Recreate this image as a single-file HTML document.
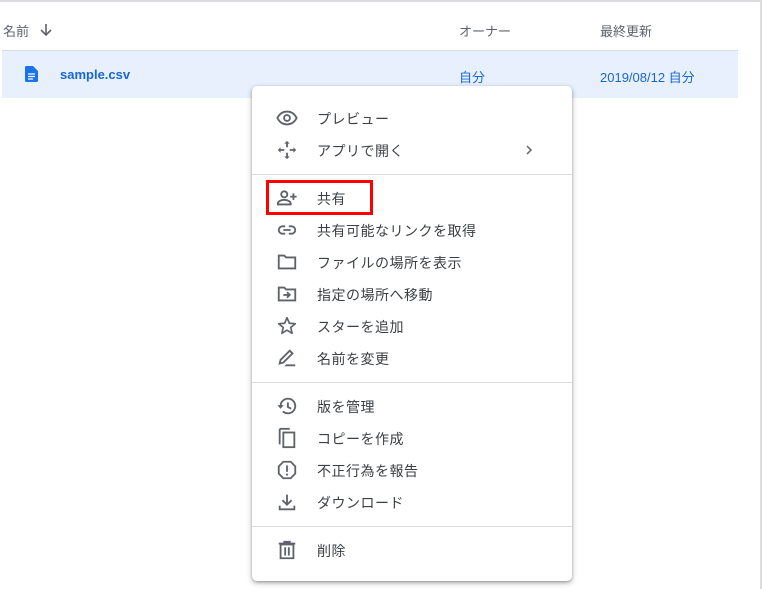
<!DOCTYPE html>
<html><head><meta charset="utf-8">
<style>
*{margin:0;padding:0;box-sizing:border-box}
html,body{width:763px;height:589px;background:#fff;overflow:hidden;font-family:"Liberation Sans","Noto Sans CJK JP",sans-serif;position:relative}
.topline{position:absolute;left:0;top:0;width:762px;height:2px;background:#dadce0}
.rline{position:absolute;left:760px;top:0;width:2px;height:589px;background:#dadce0}
.h{position:absolute;top:21px;font-size:13px;color:#5f6368}
.sep{position:absolute;left:2px;top:50px;width:736px;height:1px;background:#dadce0}
.row{position:absolute;left:2px;top:51px;width:736px;height:47px;background:#e8f0fe}
.blue{position:absolute;top:67px;font-size:13px;color:#1967d2}
.menu{position:absolute;left:252px;top:86px;width:320px;height:495px;background:#fff;border-radius:5px;box-shadow:0 2px 6px rgba(0,0,0,.3),0 1px 2px rgba(0,0,0,.2)}
.it{position:absolute;left:0;width:320px;height:32px}
.it svg{position:absolute;left:24px;top:5px;width:22px;height:22px}
.it span{position:absolute;left:65px;top:7px;font-size:14px;color:#3c4043;letter-spacing:.5px}
.div{position:absolute;left:0;width:320px;height:1px;background:#dadce0}
.red{position:absolute;left:266px;top:180px;width:107px;height:35px;border:3px solid #f00}
</style></head><body>
<div class="topline"></div><div class="rline"></div>
<div class="h" style="left:3px">名前</div>
<svg style="position:absolute;left:38px;top:22px" width="16" height="16" viewBox="0 0 16 16"><path d="M8 2v11M3 8l5 5 5-5" stroke="#5f6368" stroke-width="1.6" fill="none"/></svg>
<div class="h" style="left:459px">オーナー</div>
<div class="h" style="left:600px">最終更新</div>
<div class="sep"></div>
<div class="row"></div>
<svg style="position:absolute;left:25px;top:66px" width="13" height="16" viewBox="0 0 13 16"><path d="M1.5 0H8l5 5v9.5a1.5 1.5 0 0 1-1.5 1.5h-10A1.5 1.5 0 0 1 0 14.5v-13A1.5 1.5 0 0 1 1.5 0z" fill="#1a73e8"/><path d="M3 8h7M3 10.5h7M3 13h5" stroke="#fff" stroke-width="1.3"/></svg>
<div class="blue" style="left:60px;font-weight:bold">sample.csv</div>
<div class="blue" style="left:459px">自分</div>
<div class="blue" style="left:600px">2019/08/12 自分</div>

<div class="menu">
 <div class="it" style="top:16px"><svg viewBox="0 0 24 24"><path d="M1.5 12C4 7 8 5 12 5s8 2 10.5 7C20 17 16 19 12 19S4 17 1.5 12z" fill="none" stroke="#5f6368" stroke-width="2"/><circle cx="12" cy="12" r="3.2" fill="none" stroke="#5f6368" stroke-width="2"/></svg><span>プレビュー</span></div>
 <div class="it" style="top:48px"><svg viewBox="0 0 24 24"><path d="M12 2l-3 3h2v4h2V5h2zM12 22l3-3h-2v-4h-2v4H9zM2 12l3 3v-2h4v-2H5V9zM22 12l-3-3v2h-4v2h4v2z" fill="#5f6368"/></svg><span>アプリで開く</span><svg style="left:270px;top:9px;width:14px;height:14px" viewBox="0 0 14 14"><path d="M5 3l4 4-4 4" fill="none" stroke="#5f6368" stroke-width="1.5"/></svg></div>
 <div class="div" style="top:88px"></div>
 <div class="it" style="top:96px"><svg viewBox="0 0 24 24"><circle cx="9" cy="8" r="3.3" fill="none" stroke="#5f6368" stroke-width="2"/><path d="M2 19v-1c0-2.5 4-4 7-4s7 1.5 7 4v1z" fill="none" stroke="#5f6368" stroke-width="2"/><path d="M19 7v7M15.5 10.5h7" stroke="#5f6368" stroke-width="2"/></svg><span>共有</span></div>
 <div class="it" style="top:128px"><svg viewBox="0 0 24 24"><path d="M10 8H7a4 4 0 0 0 0 8h3M14 8h3a4 4 0 0 1 0 8h-3M8 12h8" fill="none" stroke="#5f6368" stroke-width="2"/></svg><span>共有可能なリンクを取得</span></div>
 <div class="it" style="top:160px"><svg viewBox="0 0 24 24"><path d="M3 5h6l2 2h10v12H3z" fill="none" stroke="#5f6368" stroke-width="2"/></svg><span>ファイルの場所を表示</span></div>
 <div class="it" style="top:192px"><svg viewBox="0 0 24 24"><path d="M3 5h6l2 2h10v12H3z" fill="none" stroke="#5f6368" stroke-width="2"/><path d="M8 13h7M12 10l3 3-3 3" fill="none" stroke="#5f6368" stroke-width="2"/></svg><span>指定の場所へ移動</span></div>
 <div class="it" style="top:224px"><svg viewBox="0 0 24 24"><path d="M12 3l2.6 6 6.4.5-4.9 4.2 1.5 6.3L12 16.6 6.4 20l1.5-6.3L3 9.5 9.4 9z" fill="none" stroke="#5f6368" stroke-width="1.8" stroke-linejoin="round"/></svg><span>スターを追加</span></div>
 <div class="it" style="top:256px"><svg viewBox="0 0 24 24"><path d="M4 18l1-4L15 4l3 3L8 17z" fill="none" stroke="#5f6368" stroke-width="2"/><path d="M11 19h10v2H9z" fill="#5f6368"/></svg><span>名前を変更</span></div>
 <div class="div" style="top:296px"></div>
 <div class="it" style="top:304px"><svg viewBox="0 0 24 24"><path d="M5 12a8 8 0 1 1 2.5 5.8" fill="none" stroke="#5f6368" stroke-width="2"/><path d="M1.5 11l3.5 4 3.5-4z" fill="#5f6368"/><path d="M13 8v5l3.5 2" fill="none" stroke="#5f6368" stroke-width="2"/></svg><span>版を管理</span></div>
 <div class="it" style="top:336px"><svg viewBox="0 0 24 24"><path d="M4 2v17" stroke="#5f6368" stroke-width="2"/><path d="M4 2h11" stroke="#5f6368" stroke-width="2"/><rect x="8" y="6" width="12" height="16" fill="none" stroke="#5f6368" stroke-width="2"/></svg><span>コピーを作成</span></div>
 <div class="it" style="top:368px"><svg viewBox="0 0 24 24"><path d="M8 3h8l5 5v8l-5 5H8l-5-5V8z" fill="none" stroke="#5f6368" stroke-width="2"/><path d="M12 7v7" stroke="#5f6368" stroke-width="2"/><circle cx="12" cy="17" r="1.2" fill="#5f6368"/></svg><span>不正行為を報告</span></div>
 <div class="it" style="top:400px"><svg viewBox="0 0 24 24"><path d="M12 4v11M7 10l5 5 5-5M4 16v4h16v-4" fill="none" stroke="#5f6368" stroke-width="2"/></svg><span>ダウンロード</span></div>
 <div class="div" style="top:440px"></div>
 <div class="it" style="top:448px"><svg viewBox="0 0 24 24"><path d="M3 5h18M9 5V3h6v2" fill="none" stroke="#5f6368" stroke-width="2"/><path d="M5 6h14v15H5z" fill="none" stroke="#5f6368" stroke-width="2"/><path d="M10 9v9M14 9v9" stroke="#5f6368" stroke-width="2"/></svg><span>削除</span></div>
</div>
<div class="red"></div>
</body></html>
